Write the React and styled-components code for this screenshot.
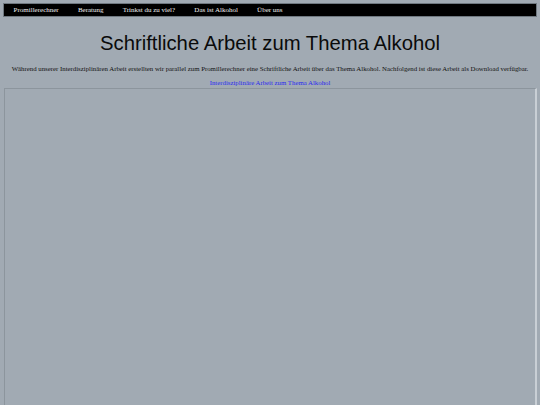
import React from 'react';
import styled, { createGlobalStyle } from 'styled-components';

const GlobalStyle = createGlobalStyle`
  html, body {
    margin: 0;
    padding: 0;
    background: #a1aab3;
  }
  body {
    font-family: 'Liberation Serif', 'Times New Roman', serif;
  }
`;

const Page = styled.div`
  display: flex;
  flex-direction: column;
  height: 405px;
  padding: 3px 3px 0;
  box-sizing: border-box;
  overflow: hidden;
`;

const NavBar = styled.nav`
  display: flex;
  align-items: center;
  height: 12px;
  background: #000;
  border: 1px solid #6f7880;
`;

const NavItem = styled.a`
  padding: 0 9.6px;
  color: #f0f0f0;
  font-size: 7px;
  line-height: 12px;
  text-decoration: none;
  white-space: nowrap;
`;

const Title = styled.h1`
  margin: 13px 0 0;
  text-align: center;
  font-family: 'Liberation Sans', Arial, sans-serif;
  font-weight: normal;
  font-size: 20.3px;
  line-height: 26px;
  color: #0a0a0a;
`;

const Intro = styled.p`
  margin: 8px 0 0;
  padding: 0 4px;
  text-align: center;
  font-size: 6.8px;
  line-height: 10px;
  color: #111;
`;

const DownloadLink = styled.a`
  display: block;
  margin-top: 4px;
  text-align: center;
  font-size: 6.8px;
  line-height: 10px;
  color: #2a2aee;
  text-decoration: none;
`;

const Frame = styled.div`
  flex: 1;
  margin: 0 0 0 1px;
  border-style: solid;
  border-width: 1px 2px 0 1px;
  border-color: #8c959d #c9cfd5 transparent #8c959d;
  background: #a1aab3;
`;

const links = ['Promillerechner', 'Beratung', 'Trinkst du zu viel?', 'Das ist Alkohol', 'Über uns'];

export default function App() {
  return (
    <>
      <GlobalStyle />
      <Page>
        <NavBar>
          {links.map((l) => (
            <NavItem key={l} href="#">{l}</NavItem>
          ))}
        </NavBar>
        <Title>Schriftliche Arbeit zum Thema Alkohol</Title>
        <Intro>
          Während unserer Interdisziplinären Arbeit erstellten wir parallel zum Promillerechner eine Schriftliche Arbeit über das Thema Alkohol. Nachfolgend ist diese Arbeit als Download verfügbar.
        </Intro>
        <DownloadLink href="#">Interdisziplinäre Arbeit zum Thema Alkohol</DownloadLink>
        <Frame />
      </Page>
    </>
  );
}
